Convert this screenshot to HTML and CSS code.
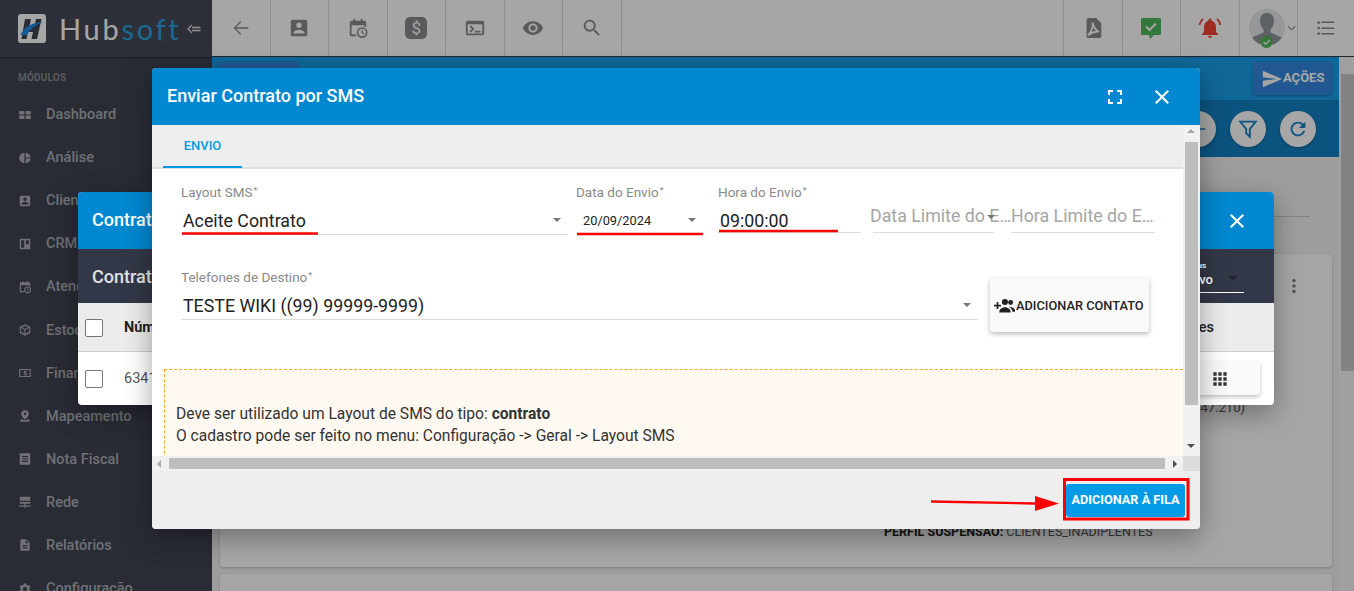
FILE: index.html
```html
<!DOCTYPE html>
<html lang="pt-BR">
<head>
  <meta charset="UTF-8" />
  <title>Hubsoft - Enviar Contrato por SMS</title>
  <link rel="stylesheet" href="styles.css">
</head>
<body>

<svg class="sprite" xmlns="http://www.w3.org/2000/svg">
  <symbol id="i-back" viewBox="0 0 24 24"><path d="M20 11.200H6.600l5.600-5.600L11.200 4.600l-7.400 7.400 7.400 7.400 1-1-5.600-5.600H20z"/></symbol>
  <symbol id="i-person-box" viewBox="0 0 24 24"><path d="M3 5v14a2 2 0 0 0 2 2h14c1.100 0 2-.9 2-2V5c0-1.100-.9-2-2-2H5a2 2 0 0 0-2 2zm12 4c0 1.660-1.340 3-3 3s-3-1.340-3-3 1.340-3 3-3 3 1.340 3 3zm-9 8c0-2 4-3.100 6-3.100s6 1.100 6 3.100v1H6v-1z"/></symbol>
  <symbol id="i-cal-clock" viewBox="0 0 24 24"><path d="M5 4h2V2h2v2h6V2h2v2h2a2 2 0 0 1 2 2v5h-2V9H5v10h5v2H5a2 2 0 0 1-2-2V6a2 2 0 0 1 2-2z"/><circle cx="16.500" cy="17" r="5" fill="none" stroke="currentColor" stroke-width="1.800"/><path d="M16 14h1.300v3l2 1.200-.6 1-2.700-1.600z"/></symbol>
  <symbol id="i-terminal" viewBox="0 0 24 24"><path d="M20 4H4c-1.100 0-2 .9-2 2v12c0 1.100.9 2 2 2h16c1.100 0 2-.9 2-2V6c0-1.100-.9-2-2-2zm0 14H4V8h16v10zm-2-1h-6v-2h6v2zM7.500 17l-1.410-1.410L8.670 13l-2.590-2.590L7.500 9l4 4-4 4z"/></symbol>
  <symbol id="i-eye" viewBox="0 0 24 24"><path d="M12 4.500C7 4.500 2.730 7.610 1 12c1.730 4.390 6 7.500 11 7.500s9.270-3.110 11-7.500c-1.730-4.390-6-7.500-11-7.500zM12 17c-2.760 0-5-2.240-5-5s2.240-5 5-5 5 2.240 5 5-2.240 5-5 5zm0-8c-1.660 0-3 1.340-3 3s1.340 3 3 3 3-1.340 3-3-1.340-3-3-3z"/></symbol>
  <symbol id="i-search" viewBox="0 0 24 24"><path d="M15.500 14h-.79l-.28-.27C15.410 12.590 16 11.110 16 9.500 16 5.910 13.090 3 9.500 3S3 5.910 3 9.500 5.910 16 9.500 16c1.610 0 3.090-.59 4.230-1.570l.27.28v.79l5 4.990L20.490 19l-4.990-5zm-6 0C7.010 14 5 11.990 5 9.500S7.010 5 9.500 5 14 7.010 14 9.500 11.990 14 9.500 14z"/></symbol>
  <symbol id="i-pdf" viewBox="0 0 24 24"><path d="M7 1h8.500L21 6.500V21a2 2 0 0 1-2 2H7a2 2 0 0 1-2-2V3a2 2 0 0 1 2-2z"/><path d="M11.500 6c.5 5-1 10-5 14 3-2.500 8-4.500 12-4-3.500-1.500-6-5-7-10z" fill="none" stroke="#fff" stroke-width="1.800"/></symbol>
  <symbol id="i-chat-check" viewBox="0 0 24 24"><path d="M3 2h18a1 1 0 0 1 1 1v15a1 1 0 0 1-1 1h-6l-4 4-1-4H3a1 1 0 0 1-1-1V3a1 1 0 0 1 1-1z"/><path d="M7 10.500l3.500 3.500L17 7.500" fill="none" stroke="#fff" stroke-width="2"/></symbol>
  <symbol id="i-bell" viewBox="0 0 24 24"><path d="M12 22c1.100 0 2-.9 2-2h-4c0 1.100.89 2 2 2zm6-6v-5c0-3.070-1.640-5.640-4.500-6.320V4c0-.83-.67-1.500-1.500-1.500s-1.500.67-1.500 1.500v.68C7.630 5.360 6 7.920 6 11v5l-2 2v1h16v-1l-2-2z"/><path d="M5 3a10 10 0 0 0-3.500 6M19 3a10 10 0 0 1 3.500 6" fill="none" stroke="currentColor" stroke-width="1.700"/></symbol>
  <symbol id="i-list" viewBox="0 0 24 24"><path d="M4 10.500c-.83 0-1.500.67-1.500 1.500s.67 1.500 1.500 1.500 1.500-.67 1.500-1.500-.67-1.500-1.500-1.500zm0-6c-.83 0-1.500.67-1.500 1.500S3.170 7.500 4 7.500 5.500 6.830 5.500 6 4.830 4.500 4 4.500zm0 12c-.83 0-1.500.68-1.500 1.500s.68 1.500 1.500 1.500 1.500-.68 1.500-1.500-.67-1.500-1.500-1.500zM7 19h14v-1.600H7V19zm0-6h14v-1.600H7V13zm0-8v1.600h14V5H7z"/></symbol>
  <symbol id="i-close" viewBox="0 0 24 24"><path d="M19 6.410L17.590 5 12 10.590 6.410 5 5 6.410 10.590 12 5 17.590 6.410 19 12 13.410 17.590 19 19 17.590 13.410 12z"/></symbol>
  <symbol id="i-fullscreen" viewBox="0 0 24 24"><path d="M7 14H5v5h5v-2H7v-3zm-2-4h2V7h3V5H5v5zm12 7h-3v2h5v-5h-2v3zM14 5v2h3v3h2V5h-5z"/></symbol>
  <symbol id="i-send" viewBox="0 0 24 24"><path d="M2.010 21L23 12 2.010 3 2 10l15 2-15 2z"/></symbol>
  <symbol id="i-filter" viewBox="0 0 24 24"><path d="M3.500 4h17l-6.500 8v8.500l-4-4V12z" fill="none" stroke="currentColor" stroke-width="2"/></symbol>
  <symbol id="i-refresh" viewBox="0 0 24 24"><path d="M17.650 6.350C16.200 4.900 14.210 4 12 4c-4.420 0-7.990 3.580-7.990 8s3.570 8 7.990 8c3.730 0 6.840-2.550 7.730-6h-2.080c-.82 2.330-3.040 4-5.650 4-3.310 0-6-2.690-6-6s2.690-6 6-6c1.660 0 3.140.69 4.220 1.780L13 11h7V4l-2.350 2.350z"/></symbol>
  <symbol id="i-apps" viewBox="0 0 24 24"><path d="M4 8h4V4H4v4zm6 12h4v-4h-4v4zm-6 0h4v-4H4v4zm0-6h4v-4H4v4zm6 0h4v-4h-4v4zm6-10v4h4V4h-4zm-6 4h4V4h-4v4zm6 6h4v-4h-4v4zm0 6h4v-4h-4v4z"/></symbol>
  <symbol id="i-dots" viewBox="0 0 24 24"><circle cx="12" cy="5.500" r="2"/><circle cx="12" cy="12" r="2"/><circle cx="12" cy="18.500" r="2"/></symbol>
  <symbol id="i-group-add" viewBox="0 0 24 24"><path d="M0 11h3V8h2v3h3v2H5v3H3v-3H0z"/><circle cx="12.500" cy="8" r="3.500"/><circle cx="19" cy="8.500" r="2.800"/><path d="M6 19c0-3 4-5 6.500-5s6.500 2 6.500 5v1H6z"/><path d="M17 13.500c3 0 7 1.500 7 4v1.500h-3c0-2-1.500-4-4-5.500z"/></symbol>
  <symbol id="i-dash" viewBox="0 0 24 24"><path d="M2 5h9v6H2zM13 5h9v6h-9zM2 13h9v6H2zM13 13h9v6h-9z"/></symbol>
  <symbol id="i-pie" viewBox="0 0 24 24"><path d="M11 3v18c-5.070-.5-9-4-9-9s3.930-8.500 9-9zm2.030 0v7.990H22c-.47-4.240-4.240-7.520-8.970-7.990zm0 10.010V21c4.740-.47 8.500-3.250 8.970-7.990h-8.970z"/></symbol>
  <symbol id="i-board" viewBox="0 0 24 24"><path d="M3 3h18v18H3zm2.500 2.500v13h5v-13zm8 0v7h5v-7z" fill-rule="evenodd"/></symbol>
  <symbol id="i-box" viewBox="0 0 24 24"><path d="M12 2l9 5v10l-9 5-9-5V7zM5.500 8.500l5.500 3v7l-6-3.300V8.800zm13 0L13 11.500v7l6-3.300V8.800zM12 4.500L7 7.300l5 2.800 5-2.800z" fill-rule="evenodd"/></symbol>
  <symbol id="i-cash" viewBox="0 0 24 24"><path d="M2 5h20v14H2zm2 2v10h16V7zm6 1h5v2h-3v1h3v5h-5v-2h3v-1h-3z" fill-rule="evenodd"/></symbol>
  <symbol id="i-pin" viewBox="0 0 24 24"><path d="M12 2a6.500 6.500 0 0 1 6.500 6.500c0 4-6.500 9.500-6.500 9.500S5.500 12.500 5.500 8.500A6.500 6.500 0 0 1 12 2zm0 4.500a2 2 0 1 0 0 4 2 2 0 0 0 0-4z" fill-rule="evenodd"/><path d="M4 19c1-1.500 2-2 3-2.300l1 1.500c-1 .2-1.600.4-2 .8h12c-.4-.4-1-.6-2-.8l1-1.500c1 .3 2 .8 3 2.300v3H4z"/></symbol>
  <symbol id="i-note" viewBox="0 0 24 24"><path d="M3 2h18v20H3zm4 5v2h10V7zm0 4v2h10v-2zm0 4v2h10v-2z" fill-rule="evenodd"/></symbol>
  <symbol id="i-dns" viewBox="0 0 24 24"><path d="M3 3h18v7H3zM3 12h18v3H3zM11 15h2v3h9v2h-9v2h-2v-2H2v-2h9z"/></symbol>
  <symbol id="i-doc" viewBox="0 0 24 24"><path d="M14 2H6c-1.100 0-1.990.9-1.990 2L4 20c0 1.100.89 2 1.990 2H18c1.100 0 2-.9 2-2V8l-6-6zm2 16H8v-2h8v2zm0-4H8v-2h8v2zm-3-5V3.500L18.500 9H13z"/></symbol>
  <symbol id="i-gear" viewBox="0 0 24 24"><path d="M19.140 12.940c.04-.3.060-.61.060-.94 0-.32-.02-.64-.07-.94l2.030-1.580a.49.49 0 0 0 .12-.61l-1.920-3.320a.488.488 0 0 0-.59-.22l-2.390.96c-.5-.38-1.030-.7-1.620-.94l-.36-2.540a.484.484 0 0 0-.48-.41h-3.840c-.24 0-.43.17-.47.41l-.36 2.540c-.59.24-1.130.57-1.620.94l-2.390-.96c-.22-.08-.47 0-.59.22L2.740 8.870c-.12.21-.08.47.12.61l2.030 1.580c-.05.3-.09.63-.09.94s.02.64.07.94l-2.030 1.580a.49.49 0 0 0-.12.61l1.920 3.320c.12.22.37.29.59.22l2.390-.96c.5.38 1.030.7 1.620.94l.36 2.540c.05.24.24.41.48.41h3.840c.24 0 .44-.17.47-.41l.36-2.540c.59-.24 1.130-.56 1.620-.94l2.390.96c.22.08.47 0 .59-.22l1.920-3.320c.12-.22.07-.47-.12-.61l-2.010-1.580zM12 15.600c-1.980 0-3.600-1.620-3.600-3.600s1.620-3.600 3.600-3.600 3.600 1.620 3.600 3.600-1.620 3.600-3.600 3.600z"/></symbol>
</svg>

<div class="page">

  <!-- Sidebar -->
  <aside class="sidebar">
    <div class="brand">
      <svg class="brand-mark" viewBox="0 0 28 29"><rect width="28" height="29" rx="3" fill="#ffffff"/><path d="M7 5h6l-1.500 7h5L18 5h5.500l-4.500 20h-5.500l1.500-7h-5L8.500 25H3.500z" fill="#3f4452"/><path d="M2.500 21C6 13 13 9 26 7.500 17 11 12 15 9 21z" fill="#1f8fe8"/></svg>
      <span class="brand-name">Hub<b>soft</b></span>
      <svg class="brand-toggle" viewBox="0 0 14 10"><path d="M5 1L1 5l4 4M5 3.500h8.500M5 6.500h8.500" fill="none" stroke="currentColor" stroke-width="1.300"/></svg>
    </div>
    <div class="nav-title">MÓDULOS</div>
    <nav class="nav">
      <a class="nav-item"><svg class="nav-icon"><use href="#i-dash"/></svg>Dashboard</a>
      <a class="nav-item"><svg class="nav-icon"><use href="#i-pie"/></svg>Análise</a>
      <a class="nav-item"><svg class="nav-icon"><use href="#i-person-box"/></svg>Clientes</a>
      <a class="nav-item"><svg class="nav-icon"><use href="#i-board"/></svg>CRM</a>
      <a class="nav-item"><svg class="nav-icon"><use href="#i-cal-clock"/></svg>Atendimento</a>
      <a class="nav-item"><svg class="nav-icon"><use href="#i-box"/></svg>Estoque</a>
      <a class="nav-item"><svg class="nav-icon"><use href="#i-cash"/></svg>Financeiro</a>
      <a class="nav-item"><svg class="nav-icon"><use href="#i-pin"/></svg>Mapeamento</a>
      <a class="nav-item"><svg class="nav-icon"><use href="#i-note"/></svg>Nota Fiscal</a>
      <a class="nav-item"><svg class="nav-icon"><use href="#i-dns"/></svg>Rede</a>
      <a class="nav-item"><svg class="nav-icon"><use href="#i-doc"/></svg>Relatórios</a>
      <a class="nav-item"><svg class="nav-icon"><use href="#i-gear"/></svg>Configuração</a>
    </nav>
  </aside>

  <!-- Main column -->
  <div class="main">
    <header class="topbar">
      <div class="top-cell"><svg class="top-icon"><use href="#i-back"/></svg></div>
      <div class="top-cell"><svg class="top-icon"><use href="#i-person-box"/></svg></div>
      <div class="top-cell"><svg class="top-icon"><use href="#i-cal-clock"/></svg></div>
      <div class="top-cell"><span class="dollar-box">$</span></div>
      <div class="top-cell"><svg class="top-icon"><use href="#i-terminal"/></svg></div>
      <div class="top-cell"><svg class="top-icon"><use href="#i-eye"/></svg></div>
      <div class="top-cell"><svg class="top-icon"><use href="#i-search"/></svg></div>
      <div class="top-spacer"></div>
      <div class="top-cell"><svg class="top-icon"><use href="#i-pdf"/></svg></div>
      <div class="top-cell"><svg class="top-icon green"><use href="#i-chat-check"/></svg></div>
      <div class="top-cell"><svg class="top-icon red"><use href="#i-bell"/></svg></div>
      <div class="top-cell user-cell">
        <svg class="avatar" viewBox="0 0 36 40">
          <circle cx="18" cy="18" r="18" fill="#e6e8ea"/>
          <path d="M18 4c5 0 7 3.500 7 8 0 4-2 7-3.500 8.500v3L33 28.500A18 18 0 0 1 3 28.500l11.500-5v-3C13 19 11 16 11 12c0-4.500 2-8 7-8z" fill="#90949a"/>
          <circle cx="17.500" cy="33" r="6" fill="#51b85b"/>
          <path d="M14.500 33l2.200 2.200 4-4" fill="none" stroke="#fff" stroke-width="1.300"/>
        </svg>
        <svg class="chevron" viewBox="0 0 10 6"><path d="M1 1l4 4 4-4" fill="none" stroke="currentColor" stroke-width="1.200"/></svg>
      </div>
      <div class="top-cell top-last"><svg class="top-icon"><use href="#i-list"/></svg></div>
    </header>

    <div class="content">
      <div class="content-col">
        <div class="band">
          <div class="band-top">
            <button class="band-btn"></button>
            <button class="band-btn"><svg class="band-send"><use href="#i-send"/></svg><span class="band-label">AÇÕES</span></button>
          </div>
          <div class="band-bottom">
            <span class="round-btn"><svg class="round-icon"><use href="#i-back"/></svg></span>
            <span class="round-btn"><svg class="round-icon"><use href="#i-filter"/></svg></span>
            <span class="round-btn"><svg class="round-icon"><use href="#i-refresh"/></svg></span>
          </div>
        </div>
        <div class="tab-line-row"><span class="tab-line"></span></div>
        <section class="card">
          <svg class="card-dots"><use href="#i-dots"/></svg>
          <div class="card-info">
            <p class="card-ip">CONCENTRADOR: (177.47.47.210)</p>
            <p class="card-perfil"><b>PERFIL SUSPENSÃO:</b> CLIENTES_INADIPLENTES</p>
          </div>
        </section>
        <section class="card card-next"></section>
      </div>
      <div class="page-scroll"><span class="page-thumb"></span></div>
    </div>
  </div>

  <div class="backdrop"></div>

  <!-- Dialog behind -->
  <div class="dialog dialog-contratos">
    <div class="dialog-head">
      <h2 class="dialog-title">Contratos</h2>
      <svg class="head-icon close-back"><use href="#i-close"/></svg>
    </div>
    <div class="contratos-bar">
      <span class="bar-title">Contratos</span>
      <div class="status">
        <span class="status-label">Status</span>
        <span class="status-value">Ativo</span>
        <span class="status-arrow"></span>
      </div>
    </div>
    <div class="table-head">
      <span class="check"></span>
      <span class="th-num">Número</span>
      <span class="th-acoes">Ações</span>
    </div>
    <div class="table-row">
      <span class="check"></span>
      <span class="td-num">6341</span>
      <span class="grid-btn"><svg class="grid-icon"><use href="#i-apps"/></svg></span>
    </div>
  </div>

  <!-- Dialog in front -->
  <div class="dialog dialog-sms">
    <div class="dialog-head">
      <h2 class="dialog-title">Enviar Contrato por SMS</h2>
      <svg class="head-icon"><use href="#i-fullscreen"/></svg>
      <svg class="head-icon head-close"><use href="#i-close"/></svg>
    </div>

    <div class="scroll-area">
      <div class="scroll-view">
        <div class="tabs"><span class="tab">ENVIO</span></div>

        <div class="form-row">
          <div class="field w-layout">
            <label class="field-label">Layout SMS<sup>*</sup></label>
            <div class="field-value big pad-6"><span>Aceite Contrato</span><i class="caret"></i></div>
          </div>
          <div class="field w-data">
            <label class="field-label">Data do Envio<sup>*</sup></label>
            <div class="field-value small pad-6"><span>20/09/2024</span><i class="caret"></i></div>
          </div>
          <div class="field w-hora short">
            <label class="field-label">Hora do Envio<sup>*</sup></label>
            <div class="field-value big pad-8"><span>09:00:00</span></div>
          </div>
          <div class="field w-limite short">
            <div class="placeholder limite-data">Data Limite do Envio</div>
            <i class="caret caret-over"></i>
          </div>
          <div class="field w-limite2 short">
            <div class="placeholder limite-hora">Hora Limite do Envio</div>
          </div>
        </div>

        <div class="form-row row-two">
          <div class="field w-fone">
            <label class="field-label">Telefones de Destino<sup>*</sup></label>
            <div class="field-value big pad-6"><span>TESTE WIKI ((99) 99999-9999)</span><i class="caret"></i></div>
          </div>
          <button class="add-contact"><svg class="add-icon"><use href="#i-group-add"/></svg>ADICIONAR CONTATO</button>
        </div>

        <div class="notice">
          <p>Deve ser utilizado um Layout de SMS do tipo: <b>contrato</b></p>
          <p>O cadastro pode ser feito no menu: Configuração -&gt; Geral -&gt; Layout SMS</p>
        </div>
      </div>

      <div class="vbar">
        <i class="sb-arrow up"></i>
        <span class="vthumb"></span>
        <i class="sb-arrow down"></i>
      </div>
      <div class="hbar">
        <i class="sb-arrow left"></i>
        <span class="hthumb"></span>
        <i class="sb-arrow right"></i>
      </div>
      <div class="sb-corner"></div>
    </div>

    <div class="dialog-foot">
      <button class="primary-btn">ADICIONAR À FILA</button>
    </div>
  </div>

  <!-- Red marks drawn on top of the screenshot -->
  <svg class="marks" viewBox="0 0 1354 591">
    <path d="M182 233.500H318M577 234H703M719 231H838" stroke="#f00" stroke-width="2.400" fill="none"/>
    <rect x="1064.500" y="479.500" width="123.500" height="39.500" stroke="#f00" stroke-width="3" fill="none"/>
    <path d="M931 501.500L1036 503.500" stroke="#f00" stroke-width="2.400" fill="none"/>
    <path d="M1035 496L1059 503.500 1035 511z" fill="#f00"/>
  </svg>
</div>

</body>
</html>
```

FILE: styles.css
```css
* { box-sizing: border-box; }
html, body { margin: 0; padding: 0; height: 100%; overflow: hidden; }
body { font-family: Roboto, "Liberation Sans", sans-serif; font-size: 14px; color: #333; }
p { margin: 0; }
button { font-family: inherit; border: none; cursor: pointer; }
.sprite { display: none; }
svg { fill: currentColor; }

.page { position: relative; display: flex; width: 1354px; height: 591px; overflow: hidden; background: #f3f3f3; }
.backdrop { position: absolute; inset: 0; background: rgba(0,0,0,.35); }

/* sidebar */
.sidebar { flex: none; width: 212px; background: #3f4452; color: #abaeb5; }
.brand { display: flex; align-items: center; height: 57px; padding-left: 18px; background: #454a57; box-shadow: 0 1px 2px rgba(0,0,0,.4); }
.brand-mark { width: 28px; height: 29px; margin-top: -1px; }
.brand-name { margin-left: 13px; font-family: Lato, sans-serif; font-weight: 400; font-size: 29px; letter-spacing: 2.700px; color: #fff; line-height: 1; }
.brand-name b { font-weight: 400; color: #2aa0e0; }
.brand-toggle { width: 14px; height: 10px; margin-left: 6px; margin-top: 1px; color: #e0e0e0; }
.nav-title { padding: 15px 0 0 18px; height: 36px; font-size: 10px; font-weight: 700; color: #8a8d94; letter-spacing: .2px; }
.nav-item { display: flex; align-items: center; height: 43.100px; padding-left: 18px; font-size: 14.500px; font-weight: 500; }
.nav-icon { flex: none; width: 14px; height: 14px; margin-right: 14px; }

/* top bar */
.main { flex: 1; display: flex; flex-direction: column; min-width: 0; }
.topbar { flex: none; display: flex; height: 57px; background: #fff; border-bottom: 1px solid #2c3a44; }
.top-cell { flex: none; width: 58.500px; display: flex; align-items: center; justify-content: center; border-right: 1px solid #dcdcdc; color: #8a8a8a; }
.top-last { width: 56px; border-right: none; }
.top-spacer { flex: 1; border-right: 1px solid #dcdcdc; }
.top-icon { width: 22px; height: 22px; color: #8a8a8a; }
.top-icon.green { color: #51b85b; width: 24px; height: 24px; }
.top-icon.red { color: #f44336; width: 24px; height: 24px; }
.dollar-box { display: flex; align-items: center; justify-content: center; width: 22px; height: 22px; border-radius: 5px; background: #8a8a8a; color: #fff; font-size: 17px; }
.user-cell { justify-content: flex-start; padding-left: 9px; }
.avatar { width: 36px; height: 40px; margin-top: 2px; }
.chevron { width: 9px; height: 6px; margin-left: 2px; color: #8a8a8a; }

/* page behind the dialogs */
.content { flex: 1; display: flex; min-height: 0; }
.content-col { flex: 1; min-width: 0; }
.page-scroll { flex: none; width: 15px; padding: 17px 0 0 2px; background: #f6f6f6; }
.page-thumb { display: block; height: 297px; background: #c9c9c9; }
.band { height: 100px; }
.band-top { display: flex; justify-content: space-between; align-items: flex-start; height: 43px; padding: 5px 7px 0 7px; background: #1aa0eb; }
.band-btn { display: flex; align-items: center; width: 79px; height: 33px; padding: 0 0 0 9px; border-radius: 4px; background: #3388e0; color: #fff; font-size: 13px; font-weight: 700; box-shadow: 0 1px 3px rgba(0,0,0,.3); }
.band-label { margin-bottom: 2px; }
.band-send { flex: none; width: 22px; height: 22px; margin-left: -1px; }
.band-bottom { display: flex; justify-content: flex-end; align-items: center; gap: 14px; height: 57px; padding-right: 23px; background: #1282c5; }
.round-btn { display: flex; align-items: center; justify-content: center; width: 36px; height: 36px; border-radius: 50%; background: #fff; color: #1282c5; box-shadow: 0 1px 3px rgba(0,0,0,.3); }
.round-icon { width: 22px; height: 22px; }
.tab-line-row { display: flex; justify-content: flex-end; height: 97px; padding: 59px 29px 0 0; }
.tab-line { width: 60px; height: 1px; background: #ccc; }
.card { position: relative; height: 313px; margin: 0 7px 0 8px; background: #fff; border-radius: 4px; box-shadow: 0 1px 3px rgba(0,0,0,.2); padding: 147px 0 0 664px; font-size: 12.500px; color: #555; }
.card-next { margin-top: 7px; padding: 0; }
.card-dots { position: absolute; top: 22px; right: 28px; width: 20px; height: 20px; color: #777; }
.card-ip { width: 361px; text-align: right; font-size: 13px; line-height: 14px; }
.card-perfil { margin-top: 110px; line-height: 14px; }
.card-perfil b { color: #222; }

/* dialogs */
.dialog { position: absolute; display: flex; flex-direction: column; border-radius: 4px; overflow: hidden; box-shadow: 0 8px 28px rgba(0,0,0,.35); }
.dialog-contratos { left: 78px; top: 192px; width: 1196px; height: 213px; background: #fff; }
.dialog-sms { left: 152px; top: 68px; width: 1048px; height: 461px; background: #eee; }
.dialog-head { flex: none; display: flex; align-items: center; height: 57px; padding-left: 15px; background: #0288d1; color: #fff; }
.dialog-contratos .dialog-head { padding-left: 14px; }
.dialog-title { flex: 1; margin: 0 0 2px; font-size: 18px; font-weight: 500; line-height: 1; }
.head-icon { flex: none; width: 24px; height: 24px; margin-right: 26px; color: #fff; }
.head-close { margin-right: 26px; }
.close-back { margin-right: 25px; }
.head-icon + .head-close { margin-left: -3px; }

/* contratos dialog */
.contratos-bar { flex: none; display: flex; align-items: center; justify-content: space-between; height: 54px; padding: 0 30px 0 14px; background: #333848; color: #e4e4e4; }
.bar-title { font-size: 18px; font-weight: 500; padding-top: 1px; }
.status { position: relative; display: flex; flex-direction: column; width: 61px; height: 33px; padding-top: 1px; border-bottom: 1.500px solid #fff; color: #fff; }
.status-label { font-size: 8px; font-weight: 700; line-height: 10px; }
.status-value { font-size: 13px; font-weight: 500; line-height: 18px; }
.status-arrow { position: absolute; right: 6px; top: 16px; border: 5px solid transparent; border-top-color: #22252e; }
.table-head { flex: none; display: flex; align-items: center; height: 49px; padding: 1px 0 0 7px; background: #ececec; border-bottom: 1px solid #ccc; font-size: 14.500px; font-weight: 700; color: #222; }
.check { flex: none; width: 18px; height: 18px; border: 1px solid #777; border-radius: 2px; background: #fff; }
.th-num, .td-num { margin-left: 21px; }
.th-acoes { margin-left: auto; margin-right: 60px; font-weight: 500; }
.table-row { flex: none; display: flex; align-items: center; height: 53px; padding-left: 7px; }
.td-num { color: #555; font-size: 14.500px; }
.grid-btn { display: flex; align-items: center; justify-content: flex-end; margin-left: auto; margin-right: 14px; width: 90px; height: 33px; padding-right: 30px; border-radius: 4px; background: #fafafa; box-shadow: 0 2px 4px rgba(0,0,0,.25); }
.grid-icon { width: 20px; height: 20px; color: #333; }

/* sms dialog */
.scroll-area { flex: none; display: grid; grid-template-columns: 1031px 17px; grid-template-rows: 331px 15px; height: 346px; }
.scroll-view { overflow: hidden; background: #fff; }
.tabs { height: 44px; padding-left: 11px; background: #eee; border-bottom: 2px solid #e0e0e0; }
.tab { display: block; width: 79px; height: 43px; line-height: 42px; text-align: center; font-size: 13px; font-weight: 500; color: #039be5; border-bottom: 2px solid #039be5; }
.form-row { display: flex; align-items: flex-start; padding: 16px 0 0 29px; }
.row-two { padding-top: 35px; }
.field { position: relative; flex: none; display: flex; flex-direction: column; height: 50px; border-bottom: 1px solid #ddd; }
.field.short { height: 48px; }
.w-layout { width: 387px; margin-right: 8px; }
.w-data { width: 127px; margin-right: 15px; }
.w-hora { width: 143px; margin-right: 12px; }
.w-limite { width: 121px; margin-right: 17px; }
.w-limite2 { width: 144px; }
.w-fone { width: 797px; margin-right: 12px; }
.field-label { height: 15px; font-size: 13.500px; line-height: 14px; color: #8a8a8a; }
.field-label sup { font-size: 9px; line-height: 0; margin-left: 1px; vertical-align: 3px; }
.field-value { flex: 1; display: flex; align-items: center; justify-content: space-between; padding-left: 2px; padding-right: 7px; color: #222; }
.field-value.big { font-size: 17.800px; }
.field-value.small { font-size: 12.800px; padding-left: 7px; }
.pad-6 { padding-top: 6px; }
.pad-8 { padding-top: 8px; }
.caret { flex: none; width: 0; height: 0; border: 4.500px solid transparent; border-top-color: #777; border-bottom-width: 0; }
.caret-over { position: absolute; right: -1px; top: 30px; }
.placeholder { padding-top: 21px; font-size: 17.800px; line-height: 20px; color: #a5a5a5; white-space: nowrap; overflow: hidden; text-overflow: ellipsis; }
.limite-data { margin-left: -3px; width: 143px; }
.limite-hora { width: 146px; }
.add-contact { flex: none; display: flex; align-items: center; width: 159px; height: 54px; margin-top: 8px; padding: 0 0 0 4px; border-radius: 3px; background: #fafafa; color: #222; font-size: 12.800px; font-weight: 500; box-shadow: 0 2px 5px rgba(0,0,0,.28); white-space: nowrap; }
.add-icon { flex: none; width: 21px; height: 21px; margin-right: 1px; }
.notice { margin: 37px 0 0 12px; height: 100px; padding: 33px 0 0 11px; background: #fff9f1; border-top: 1px dashed #f5a623; border-left: 1px dashed #f5a623; font-size: 15.600px; line-height: 22px; color: #333; }
.vbar { position: relative; padding: 17px 2px 0; background: #f1f1f1; }
.vthumb { display: block; height: 263px; background: #bdbdbd; }
.hbar { position: relative; padding: 2px 18px 2px 17px; background: #f1f1f1; }
.hthumb { display: block; height: 11px; background: #bdbdbd; }
.sb-corner { background: #dcdcdc; }
.sb-arrow { position: absolute; width: 0; height: 0; border: 4px solid transparent; }
.sb-arrow.up { top: 4px; left: 4px; border-bottom-color: #a8a8a8; border-top-width: 0; }
.sb-arrow.down { bottom: 8px; left: 4px; border-top-color: #505050; border-bottom-width: 0; }
.sb-arrow.left { left: 5px; top: 3.500px; border-right-color: #a8a8a8; border-left-width: 0; }
.sb-arrow.right { right: 6px; top: 3.500px; border-left-color: #505050; border-right-width: 0; }
.dialog-foot { flex: 1; display: flex; align-items: center; justify-content: flex-end; padding-right: 15px; background: #eee; }
.primary-btn { width: 119px; height: 33px; padding: 0 0 2px; border-radius: 3px; background: #039be5; color: #fff; font-size: 12.700px; font-weight: 700; white-space: nowrap; }

.marks { position: absolute; left: 0; top: 0; width: 1354px; height: 591px; pointer-events: none; }
```
